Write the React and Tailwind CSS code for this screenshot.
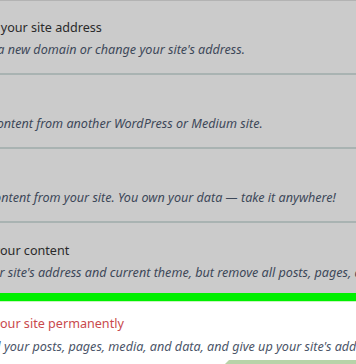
import React from 'react';

const rows = [
  { title: 'Change your site address', desc: "Register a new domain or change your site's address." },
  { title: null, desc: 'Import content from another WordPress or Medium site.' },
  { title: null, desc: 'Export content from your site. You own your data — take it anywhere!' },
];

const Title = ({ children, className = 'text-[#2a2a2a]' }) => (
  <div className={`h-[18px] -ml-[48px] text-[12.6px] leading-[18px] ${className}`}>{children}</div>
);

const Desc = ({ children, className = 'text-[#3d4859]' }) => (
  <div className={`-ml-[51px] text-[12.6px] leading-[18px] italic ${className}`}>{children}</div>
);

const SettingRow = ({ title, desc }) => (
  <div className="h-[74px] pt-[18px] flex flex-col gap-1 border-b-2 border-[#a9b3b2]">
    <Title>{title}</Title>
    <Desc>{desc}</Desc>
  </div>
);

const App = () => {
  return (
    <div className="relative w-[356px] h-[364px] overflow-hidden bg-[#cbcbcb] font-['Noto_Sans',sans-serif] whitespace-nowrap">
      <div className="h-px bg-[#b3b3b3]" />
      {rows.map((row, i) => (
        <SettingRow key={i} title={row.title} desc={row.desc} />
      ))}
      <div className="h-[70px] pt-[19px] flex flex-col gap-1">
        <Title>Delete your content</Title>
        <Desc>
          Keep your site's address and current theme, but remove all posts, pages, and media so you can start fresh.
        </Desc>
      </div>
      <div className="h-2 bg-[#00f000]" />
      <div className="h-px bg-[#c9f5c0]" />
      <div className="bg-white h-[70px] pt-[13px] flex flex-col gap-[5px]">
        <Title className="text-[#c9494c]">Delete your site permanently</Title>
        <Desc className="text-[#4b5568]">
          Delete all your posts, pages, media, and data, and give up your site's address.
        </Desc>
      </div>
      <div className="absolute right-0 bottom-0 w-[131px] h-[4px] bg-[#b7d3a8] [clip-path:polygon(4px_0,100%_0,100%_100%,0_100%)]" />
    </div>
  );
};

export default App;
